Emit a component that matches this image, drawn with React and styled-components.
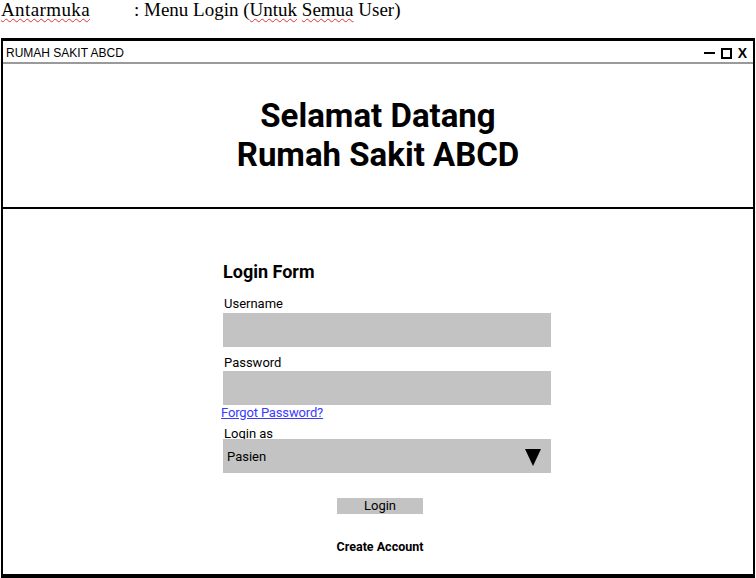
import React from "react";
import styled, { createGlobalStyle } from "styled-components";

const Global = createGlobalStyle`
  html, body { margin: 0; padding: 0; background: #fff; }
  body { width: 756px; height: 578px; overflow: hidden; }
`;

const Caption = styled.div`
  font-family: "Liberation Serif", serif;
  font-size: 19px;
  line-height: 19px;
  height: 38px;
  padding-left: 1px;
  color: #000;
  white-space: pre;
`;

const Typo = styled.span`
  text-decoration: underline wavy #e03030;
  text-decoration-thickness: 1px;
  text-underline-offset: 2px;
`;

const Label = styled.span`
  display: inline-block;
  width: 133px;
  letter-spacing: 0.4px;
`;

const Window = styled.div`
  box-sizing: border-box;
  margin: 0 1px;
  height: 540px;
  border: 2px solid #000;
  border-top-width: 3px;
  border-bottom-width: 4px;
  display: flex;
  flex-direction: column;
  font-family: Roboto, "Liberation Sans", sans-serif;
`;

const TitleBar = styled.div`
  height: 23px;
  box-sizing: border-box;
  border-bottom: 2px solid #9a9a9a;
  display: flex;
  align-items: flex-end;
  justify-content: space-between;
  padding: 0 6px 2px 3px;
  font-family: "Liberation Sans", Arial, sans-serif;
  font-size: 12px;
  line-height: 14px;
`;

const Controls = styled.div`
  display: flex;
  align-items: center;
  gap: 6px;
  height: 14px;
  font-weight: bold;
  font-size: 14px;
`;

const Dash = styled.span`
  width: 11px;
  height: 2px;
  background: #000;
`;

const Square = styled.span`
  width: 7px;
  height: 7px;
  border: 2px solid #000;
`;

const Header = styled.div`
  height: 145px;
  box-sizing: border-box;
  border-bottom: 2px solid #000;
  display: flex;
  flex-direction: column;
  align-items: center;
  justify-content: center;
  padding-bottom: 2px;
  font-size: 33px;
  font-weight: bold;
  line-height: 39px;
`;

const Body = styled.div`
  flex: 1;
  display: flex;
  flex-direction: column;
  padding: 52px 0 0 220px;
`;

const Form = styled.div`
  width: 328px;
  display: flex;
  flex-direction: column;
`;

const FormTitle = styled.div`
  font-size: 18px;
  font-weight: bold;
  line-height: 22px;
  margin-bottom: 3px;
`;

const FieldLabel = styled.div`
  font-size: 13px;
  line-height: 16px;
  margin-top: ${(p) => p.$top || 0}px;
  margin-bottom: ${(p) => p.$bottom || 0}px;
  padding-left: 1px;
`;

const Field = styled.div`
  height: 34px;
  background: #c3c3c3;
  display: flex;
  align-items: center;
  justify-content: space-between;
  padding: 0 10px 0 4px;
  font-size: 13px;
`;

const Forgot = styled.a`
  font-size: 13px;
  line-height: 16px;
  color: #3a3aff;
  text-decoration: underline;
  margin-left: -2px;
  letter-spacing: -0.15px;
`;

const Arrow = styled.span`
  width: 0;
  height: 0;
  border-left: 8px solid transparent;
  border-right: 8px solid transparent;
  border-top: 17px solid #000;
  margin-top: 2px;
`;

const Actions = styled.div`
  display: flex;
  flex-direction: column;
  align-items: center;
  width: 314px;
`;

const LoginButton = styled.div`
  margin-top: 25px;
  width: 86px;
  height: 16px;
  background: #c3c3c3;
  font-size: 13px;
  line-height: 16px;
  text-align: center;
`;

const CreateLink = styled.div`
  margin-top: 25px;
  font-size: 12.5px;
  font-weight: bold;
  line-height: 16px;
`;

export default function App() {
  return (
    <>
      <Global />
      <Caption>
        <Label>
          <Typo>Antarmuka</Typo>
        </Label>
        : Menu Login (<Typo>Untuk</Typo> <Typo>Semua</Typo> User)
      </Caption>
      <Window>
        <TitleBar>
          <span>RUMAH SAKIT ABCD</span>
          <Controls>
            <Dash />
            <Square />
            <span>X</span>
          </Controls>
        </TitleBar>
        <Header>
          <div>Selamat Datang</div>
          <div>Rumah Sakit ABCD</div>
        </Header>
        <Body>
          <Form>
            <FormTitle>Login Form</FormTitle>
            <FieldLabel $top={10} $bottom={1}>Username</FieldLabel>
            <Field />
            <FieldLabel $top={8}>Password</FieldLabel>
            <Field />
            <Forgot href="#">Forgot Password?</Forgot>
            <FieldLabel $top={5} $bottom={-3}>Login as</FieldLabel>
            <Field>
              <span>Pasien</span>
              <Arrow />
            </Field>
          </Form>
          <Actions>
            <LoginButton>Login</LoginButton>
            <CreateLink>Create Account</CreateLink>
          </Actions>
        </Body>
      </Window>
    </>
  );
}
